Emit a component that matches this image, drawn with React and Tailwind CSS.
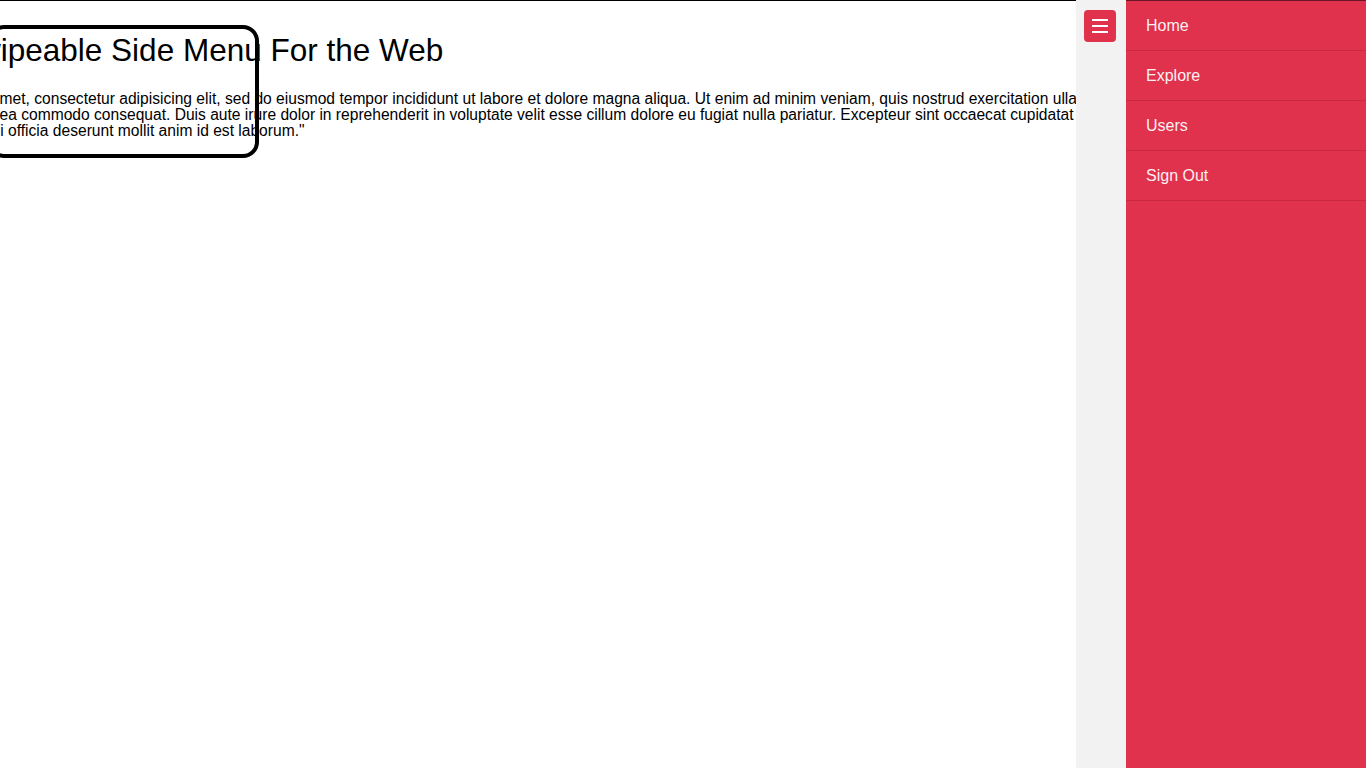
import React from "react";

const menuItems = ["Home", "Explore", "Users", "Sign Out"];

// the paragraph is cut by the page edge; each line keeps its own offset
const lines = [
  {
    text: "\"Lorem ipsum dolor sit amet, consectetur adipisicing elit, sed do eiusmod tempor incididunt ut labore et dolore magna aliqua. Ut enim ad minim veniam, quis nostrud exercitation ullamco",
    cls: "ml-[-168px]",
  },
  {
    text: "laboris nisi ut aliquip ex ea commodo consequat. Duis aute irure dolor in reprehenderit in voluptate velit esse cillum dolore eu fugiat nulla pariatur. Excepteur sint occaecat cupidatat non",
    cls: "ml-[-166px]",
  },
  {
    text: "proident, sunt in culpa qui officia deserunt mollit anim id est laborum.\"",
    cls: "ml-[-174px]",
  },
];

const App = () => {
  return (
    <div
      className="flex h-screen w-full overflow-hidden bg-white"
      style={{ fontFamily: '"Liberation Sans", Arial, sans-serif' }}
    >
      {/* page content, pushed left by the open menu */}
      <main className="relative w-[1076px] shrink-0 overflow-hidden border-t border-black text-black">
        <h1 className="ml-[-43px] mt-[31px] whitespace-nowrap text-[31.5px] font-normal leading-[37px]">
          Swipeable Side Menu For the Web
        </h1>
        <p className="mt-[22px] whitespace-nowrap text-[15.6px] leading-[16px]">
          {lines.map((line, i) => (
            <span key={i} className={`block ${line.cls}`}>
              {line.text}
            </span>
          ))}
        </p>

        {/* annotation drawn over the screenshot */}
        <div className="pointer-events-none absolute left-[-12px] top-[24px] h-[133px] w-[271px] rounded-[16px] border-4 border-black" />
      </main>

      {/* strip holding the toggle button */}
      <div className="w-[50px] shrink-0 bg-[#f2f2f2] pt-[10px] pl-[8px]">
        <button className="flex h-[32px] w-[32px] flex-col items-center justify-center gap-[4px] rounded-[4px] bg-[#e0314d]">
          <span className="block h-[2px] w-[16px] bg-white" />
          <span className="block h-[2px] w-[16px] bg-white" />
          <span className="block h-[2px] w-[16px] bg-white" />
        </button>
      </div>

      {/* side menu */}
      <nav className="flex-1 border-t border-[#6a1523] bg-[#e0314d]">
        {menuItems.map((item) => (
          <a
            key={item}
            href="#"
            className="flex h-[50px] items-center border-b border-[#c9283f] pl-[20px] text-[16px] text-[#fdf0f2]"
          >
            {item}
          </a>
        ))}
      </nav>
    </div>
  );
};

export default App;
